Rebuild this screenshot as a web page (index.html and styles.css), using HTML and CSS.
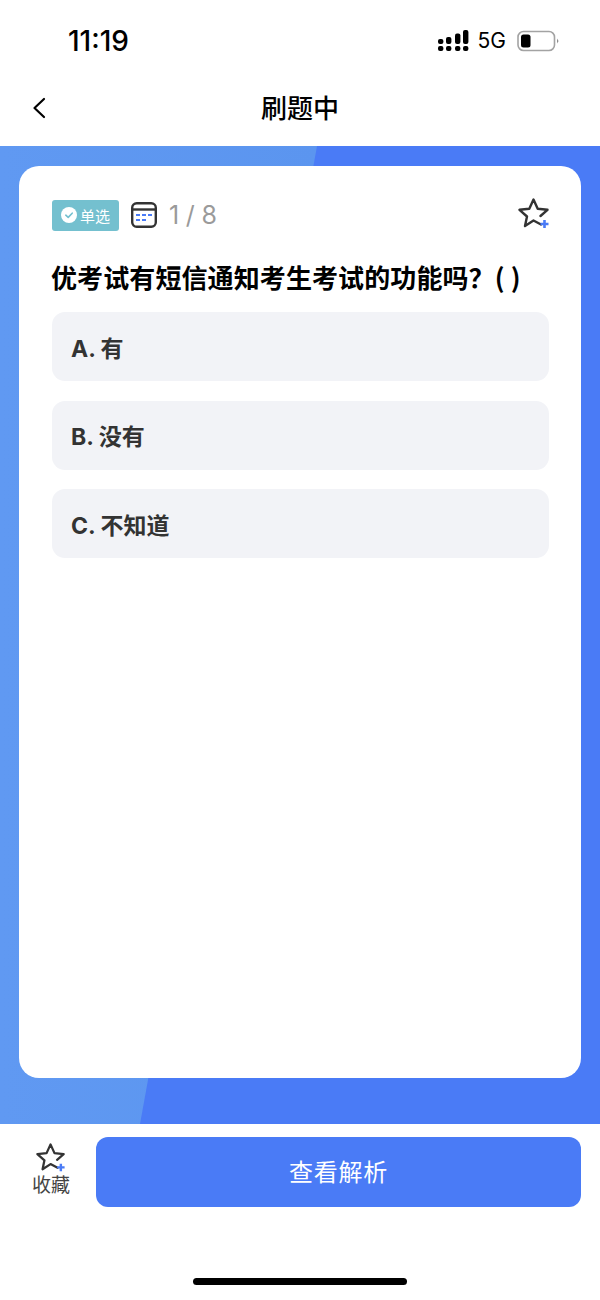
FILE: index.html
```html
<!DOCTYPE html>
<html lang="zh-CN">
<head>
<meta charset="utf-8">
<title>刷题中</title>
<link rel="stylesheet" href="styles.css">
</head>
<body>
<div class="page">
  <header class="status">
    <span class="time">11:19</span>
    <div class="status-right">
      <svg class="signal" width="31" height="22" viewBox="0 0 31 22" fill="#000">
        <rect x="0" y="9" width="5.4" height="5" rx="2"/><rect x="0" y="16" width="5.4" height="5" rx="2"/>
        <rect x="8" y="7" width="5.4" height="7" rx="2"/><rect x="8" y="16" width="5.4" height="5" rx="2"/>
        <rect x="17" y="3.5" width="5.4" height="10.5" rx="2"/><rect x="17" y="16" width="5.4" height="5" rx="2"/>
        <rect x="25" y="0" width="5.4" height="14" rx="2"/><rect x="25" y="16" width="5.4" height="5" rx="2"/>
      </svg>
      <span class="net">5G</span>
      <svg class="battery" width="42" height="22" viewBox="0 0 42 22">
        <rect x="1" y="1.5" width="36.5" height="19" rx="5.5" fill="#fff" stroke="#a3a3a3" stroke-width="1.6"/>
        <rect x="4" y="4.5" width="9.5" height="13" rx="2.5" fill="#000"/>
        <path d="M40 8.5 L41.6 11 L40 13.5 Z" fill="#8c8c8c"/>
      </svg>
    </div>
  </header>
  <nav class="nav">
    <svg class="back" width="14" height="22" viewBox="0 0 14 22" fill="none" stroke="#000" stroke-width="2.2" stroke-linecap="round" stroke-linejoin="round"><path d="M12 2 L2.5 11 L12 20"/></svg>
    <h1 class="title">刷题中</h1>
  </nav>
  <main class="stage">
    <svg class="stage-bg" viewBox="0 0 600 978" preserveAspectRatio="none"><polygon points="0,0 317,0 140,978 0,978" fill="url(#sheen)"/><defs><linearGradient id="sheen" x1="0" y1="0" x2="1" y2="0"><stop offset="0" stop-color="#6099f2"/><stop offset="1" stop-color="#5b95ef"/></linearGradient></defs></svg>
    <section class="card">
      <div class="meta">
        <span class="tag">
          <svg width="16" height="16" viewBox="0 0 16 16"><circle cx="8" cy="8" r="8" fill="#fff"/><path d="M4.8 8.2 L7.2 10.4 L11.2 6.2" fill="none" stroke="#74c0cf" stroke-width="1.6" stroke-linecap="round" stroke-linejoin="round"/></svg>
          单选
        </span>
        <svg class="cal" width="26" height="28" viewBox="0 0 26 28" fill="none">
          <rect x="1.2" y="2.2" width="23.6" height="23.6" rx="4.5" stroke="#333" stroke-width="2.4"/>
          <path d="M1.5 8.5 H24.5" stroke="#333" stroke-width="2.4"/>
          <path d="M5 14 H9 M11 14 H15 M17 14 H21 M5 19 H9 M11 19 H15" stroke="#4a7bf6" stroke-width="2.2"/>
        </svg>
        <span class="count">1 / 8</span>
        <svg class="fav" width="32" height="32" viewBox="0 0 32 32" fill="none">
          <path d="M23 26.5 L15.5 22.5 L7 28 L9 18.5 L1.5 11.8 L11.3 10.8 L15.5 1.5 L19.7 10.8 L29.5 11.8 L22.5 18" stroke="#333" stroke-width="2.4" stroke-linejoin="round" stroke-linecap="round"/>
          <path d="M26.5 22 V30 M22.5 26 H30.5" stroke="#4a7bf6" stroke-width="2.6"/>
        </svg>
      </div>
      <h2 class="question">优考试有短信通知考生考试的功能吗？( )</h2>
      <div class="options">
        <div class="option">A. 有</div>
        <div class="option">B. 没有</div>
        <div class="option">C. 不知道</div>
      </div>
    </section>
  </main>
  <footer class="bottom">
    <div class="actions">
      <div class="collect">
        <svg width="30" height="30" viewBox="0 0 32 32" fill="none">
          <path d="M23 26.5 L15.5 22.5 L7 28 L9 18.5 L1.5 11.8 L11.3 10.8 L15.5 1.5 L19.7 10.8 L29.5 11.8 L22.5 18" stroke="#333" stroke-width="2.4" stroke-linejoin="round" stroke-linecap="round"/>
          <path d="M26.5 22 V30 M22.5 26 H30.5" stroke="#4a7bf6" stroke-width="2.6"/>
        </svg>
        <span>收藏</span>
      </div>
      <button class="analysis">查看解析</button>
    </div>
    <div class="home"></div>
  </footer>
</div>
</body>
</html>
```
FILE: styles.css
```css
* { box-sizing: border-box; margin: 0; padding: 0; }
html, body { width: 600px; height: 1300px; background: #fff; overflow: hidden; }
body { font-family: Inter, "Liberation Sans", "Noto Sans CJK SC", sans-serif; color: #000; }
.page { width: 600px; height: 1300px; display: flex; flex-direction: column; }
.status { height: 72px; flex: none; display: flex; justify-content: space-between; align-items: center; padding: 9px 41px 0 68px; }
.time { font-size: 28px; font-weight: 500; line-height: 32px; }
.status-right { display: flex; align-items: center; gap: 9px; }
.net { font-size: 21px; line-height: 24px; }
.signal { display: block; }
.battery { display: block; margin-left: 2px; }
.nav { height: 74px; flex: none; display: flex; align-items: center; justify-content: center; padding-bottom: 2px; position: relative; }
.back { position: absolute; left: 32px; top: 25px; }
.title { font-size: 26px; font-weight: 500; line-height: 32px; margin-top: -2px; font-family: "Noto Sans CJK SC", sans-serif; }
.stage { height: 978px; flex: none; background: #4a7bf6; padding: 20px 19px 46px; position: relative; }
.stage-bg { position: absolute; left: 0; top: 0; width: 100%; height: 100%; display: block; }
.card { position: relative; height: 912px; background: #fff; border-radius: 20px; padding: 33px 32px 33px 33px; }
.meta { display: flex; align-items: center; height: 32px; }
.tag { width: 67px; height: 31px; background: #74c0cf; border-radius: 3px; display: flex; align-items: center; justify-content: center; gap: 3px; color: #fff; font-size: 15px; font-family: "Noto Sans CJK SC", sans-serif; }
.cal { margin-left: 12px; }
.count { margin-left: 12px; font-size: 25px; color: #9a9a9a; font-weight: 400; letter-spacing: -0.2px; }
.fav { margin-left: auto; margin-right: -1px; margin-top: -2px; }
.question { margin: 30px 0 0 -1px; font-size: 26px; line-height: 32px; font-weight: 700; color: #000; font-family: "Noto Sans CJK SC", sans-serif; letter-spacing: 0.1px; white-space: nowrap; }
.options { margin-top: 19px; display: flex; flex-direction: column; gap: 19.5px; }
.option { height: 69px; background: #f2f3f7; border-radius: 13px; padding: 0 19px; display: flex; align-items: center; font-size: 23px; font-weight: 700; color: #333; font-family: Inter, "Noto Sans CJK SC", sans-serif; }
.bottom { flex: 1; display: flex; flex-direction: column; align-items: center; }
.actions { width: 100%; display: flex; padding: 13px 19px 0 32px; }
.collect { width: 38px; display: flex; flex-direction: column; align-items: center; flex: none; color: #444; font-size: 19px; line-height: 22px; font-family: "Noto Sans CJK SC", sans-serif; padding-top: 6px; }
.collect svg { display: block; }
.analysis { margin-left: 26px; flex: 1; height: 70px; background: #4a7bf6; border: 0; border-radius: 12px; color: #fff; font-size: 24px; padding-bottom: 3px; font-family: "Noto Sans CJK SC", sans-serif; letter-spacing: 0.7px; }
.home { width: 214px; height: 7px; background: #000; border-radius: 4px; margin-top: 71px; }
```
